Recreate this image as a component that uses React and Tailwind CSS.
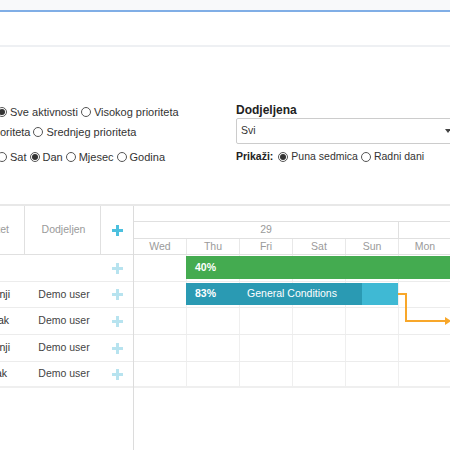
import React from 'react'

const days = ['Wed', 'Thu', 'Fri', 'Sat', 'Sun', 'Mon']

const rows = [
  { name: '', user: '', h: 'h-[27px]', pad: 'pr-[15px]' },
  { name: 'Radovi na gradnji', user: 'Demo user', h: 'h-[26px]', pad: 'pr-[15px]' },
  { name: 'Zadatak', user: 'Demo user', h: 'h-[27px]', pad: 'pr-[16px]' },
  { name: 'Radovi na gradnji', user: 'Demo user', h: 'h-[27px]', pad: 'pr-[15px]' },
  { name: 'Zadatak', user: 'Demo user', h: 'h-[26px]', pad: 'pr-[18px]', last: true },
]

function Radio({ checked }) {
  return (
    <span className="mr-[3px] flex h-[10px] w-[10px] shrink-0 items-center justify-center rounded-full border border-[#555] bg-white">
      {checked && <span className="h-[6px] w-[6px] rounded-full bg-[#333]" />}
    </span>
  )
}

function Option({ checked, label }) {
  return (
    <span className="mr-[3px] flex items-center whitespace-nowrap">
      <Radio checked={checked} />
      {label}
    </span>
  )
}

function Plus({ light }) {
  return (
    <svg width="11" height="11" viewBox="0 0 11 11">
      <rect x="4" y="0" width="3" height="11" fill={light ? '#b7e3ef' : '#4cc0de'} />
      <rect x="0" y="4" width="11" height="3" fill={light ? '#b7e3ef' : '#4cc0de'} />
    </svg>
  )
}

export default function App() {
  return (
    <div className="h-[450px] w-[450px] overflow-hidden bg-white font-['Liberation_Sans',Arial,sans-serif] text-[10.5px] text-[#333]">
      <div className="h-[10px] bg-[#f8f9fa]" />
      <div className="h-[2px] bg-[#80aee6]" />
      <div className="h-[33px]" />
      <div className="h-[2px] bg-[#eef0f3]" />
      <div className="h-[55px]" />

      {/* filters */}
      <div className="flex h-[102px] overflow-hidden">
        <div className="w-[236px] shrink-0 overflow-hidden text-[11px]">
          <div className="ml-[-3px] flex h-[20px] items-center">
            <Option checked label="Sve aktivnosti" />
            <Option label="Visokog prioriteta" />
          </div>
          <div className="ml-[-62px] flex h-[20px] items-center">
            <Option label="Niskog prioriteta" />
            <Option label="Srednjeg prioriteta" />
          </div>
          <div className="mt-[5px] ml-[-3px] flex h-[20px] items-center">
            <Option label="Sat" />
            <Option checked label="Dan" />
            <Option label="Mjesec" />
            <Option label="Godina" />
          </div>
        </div>
        <div className="flex-1 overflow-hidden">
          <div className="flex h-[16px] items-center text-[12px] font-bold text-[#222]">Dodjeljena</div>
          <div className="flex h-[26px] w-[222px] items-center justify-between rounded-[2px] border border-[#ccc] bg-white pl-[4px] pr-[6px]">
            <span>Svi</span>
            <span className="h-0 w-0 border-x-[3px] border-t-[4px] border-x-transparent border-t-[#444]" />
          </div>
          <div className="mt-[3px] flex h-[20px] items-center">
            <span className="mr-[5px] font-bold text-[#222]">Prikaži:</span>
            <Option checked label="Puna sedmica" />
            <Option label="Radni dani" />
          </div>
        </div>
      </div>

      {/* gantt */}
      <div className="flex h-[246px] border-t-2 border-[#e8e8e8]">
        <div className="w-[134px] shrink-0 border-r border-[#dcdcdc]">
          <div className="flex h-[49px] border-b border-[#e0e0e0] text-[#9a9a9a]">
            <div className="flex w-[25px] items-center justify-end overflow-hidden whitespace-nowrap border-r border-[#e0e0e0] pr-[15px]">Prioritet</div>
            <div className="flex w-[76px] items-center justify-center border-r border-[#e0e0e0] pl-[2px]">Dodjeljen</div>
            <div className="flex w-[32px] items-center justify-center pl-[1px]">
              <Plus />
            </div>
          </div>
          {rows.map((r, i) => (
            <div key={i} className={`flex ${r.h} ${r.last ? 'border-b-2 border-[#efefef]' : 'border-b border-[#ececec]'}`}>
              <div className={`flex w-[25px] items-center justify-end overflow-hidden whitespace-nowrap ${r.pad}`}>{r.name}</div>
              <div className="flex w-[76px] items-center justify-center pl-[2px] text-[#444]">{r.user}</div>
              <div className="flex w-[32px] items-center justify-center pl-[1px]">
                <Plus light />
              </div>
            </div>
          ))}
        </div>

        <div className="flex-1 overflow-hidden">
          <div className="w-[400px] text-[#9a9a9a]">
            <div className="h-[16px] border-b border-[#e0e0e0]" />
            <div className="flex h-[17px] border-b border-[#e0e0e0]">
              <div className="flex w-[265px] items-center justify-center border-r border-[#e0e0e0]">29</div>
              <div className="flex-1" />
            </div>
            <div className="flex h-[16px] border-b border-[#e0e0e0]">
              {days.map((d) => (
                <div key={d} className="flex w-[53px] shrink-0 items-center justify-center border-r border-[#e8e8e8]">{d}</div>
              ))}
            </div>

            <div className="relative">
              {rows.map((r, i) => (
                <div key={i} className={`flex ${r.h} ${r.last ? 'border-b-2 border-[#efefef]' : 'border-b border-[#ececec]'}`}>
                  {days.map((d) => (
                    <div key={d} className="w-[53px] shrink-0 border-r border-[#efefef]" />
                  ))}
                </div>
              ))}

              <div className="absolute left-[52px] top-[1px] flex h-[23px] w-[340px] items-center bg-[#44ab50] pl-[9px] font-bold text-white">
                40%
              </div>

              <div className="absolute left-[52px] top-[28px] flex h-[22px] w-[212px] bg-[#3fb9d4] text-white">
                <div className="flex w-[176px] items-center bg-[#2a9ab3] pl-[9px] font-bold">83%</div>
                <div className="absolute inset-0 flex items-center justify-center">General Conditions</div>
              </div>

              <svg className="absolute left-[264px] top-[34px]" width="60" height="40" viewBox="0 0 60 40">
                <path d="M0 5 H8 V32 H48" fill="none" stroke="#f8a72a" strokeWidth="2" />
                <path d="M47 28 L53 32 L47 36 Z" fill="#f8a72a" />
              </svg>
            </div>
          </div>
        </div>
      </div>
    </div>
  )
}
